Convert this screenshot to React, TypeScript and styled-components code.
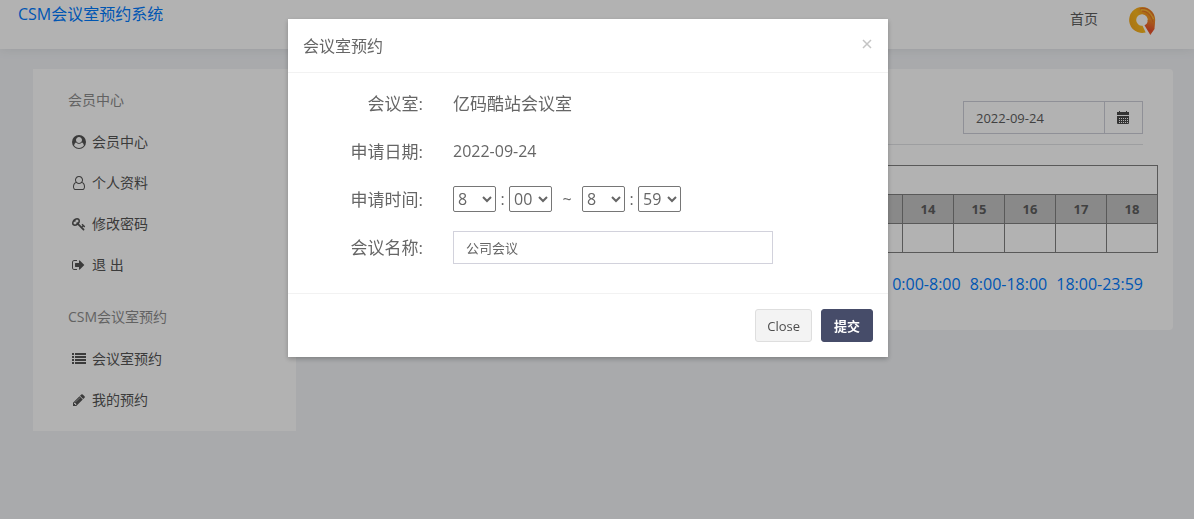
import React from "react";
import styled, { createGlobalStyle } from "styled-components";

const GlobalStyle = createGlobalStyle`
  *, *::before, *::after { box-sizing: border-box; }
  body {
    margin: 0;
    background: #f2f4f7;
    color: #5e5e5e;
    font-family: "Open Sans", "Noto Sans CJK SC", sans-serif;
    font-size: 14px;
    line-height: 20px;
  }
  a { color: inherit; text-decoration: none; }
  button, input, select { font-family: inherit; color: inherit; margin: 0; }
`;

const Header = styled.header`
  display: flex;
  justify-content: space-between;
  align-items: flex-start;
  height: 49px;
  padding: 4px 38px 0 18px;
  background: #fff;
  box-shadow: 0 1px 10px rgba(69, 65, 78, 0.1);
`;

const Brand = styled.a`
  color: #007bff;
  font-size: 16px;
`;

const HeaderNav = styled.nav`
  display: flex;
  align-items: center;
  gap: 30px;
  height: 30px;
`;

const NavLink = styled.a`
  color: #5e5e5e;
`;

const Page = styled.div`
  display: flex;
  align-items: flex-start;
  gap: 30px;
  padding: 20px 21px 20px 33px;
`;

const Sidebar = styled.aside`
  flex: 0 0 263px;
  padding: 21px 35px 11px;
  background: #fff;
`;

const MenuTitle = styled.h2`
  margin: 0 0 11px;
  font-size: 14px;
  font-weight: 400;
  color: #8d8d8d;
`;

const Menu = styled.ul`
  margin: 0 0 22px;
  padding: 0;
  list-style: none;
  &:last-child { margin-bottom: 0; }
`;

const MenuLink = styled.a`
  display: flex;
  align-items: center;
  gap: 6px;
  height: 41px;
  padding-left: 4px;
  color: #555;
  white-space: pre;
  svg { width: 14px; height: 14px; fill: currentColor; }
`;

const Card = styled.main`
  flex: 1;
  min-width: 0;
  padding: 32px 15px 36px;
  background: #fff;
  border-radius: 4px;
`;

const Toolbar = styled.div`
  display: flex;
  justify-content: flex-end;
  margin: 0 15px 20px;
  padding-bottom: 10px;
  border-bottom: 1px solid #e1e2e6;
`;

const DateGroup = styled.div`
  display: flex;
  height: 33px;
  border: 1px solid #cdced9;
`;

const DateInput = styled.input`
  width: 140px;
  padding: 0 12px;
  border: 0;
  background: transparent;
  font-size: 13px;
`;

const DateButton = styled.button`
  display: flex;
  align-items: center;
  justify-content: center;
  width: 38px;
  padding: 0;
  border: 0;
  border-left: 1px solid #cdced9;
  background: transparent;
  svg { width: 13px; height: 13px; fill: #4a4a4a; }
`;

const Schedule = styled.table`
  width: 100%;
  border-collapse: collapse;
  table-layout: fixed;
  font-size: 13px;
  th, td { height: 29px; padding: 0; border: 1px solid #808080; text-align: center; }
`;

const HourCol = styled.col`
  width: 51px;
`;

const HourRow = styled.tr`
  th, td { background: #c4c4c4; font-weight: 700; }
`;

const Ranges = styled.div`
  display: flex;
  justify-content: flex-end;
  gap: 9px;
  margin: 21px 15px 0;
  font-size: 16px;
  a { color: #007bff; }
`;

const Backdrop = styled.div`
  position: fixed;
  inset: 0;
  display: flex;
  justify-content: center;
  align-items: flex-start;
  padding: 19px 18px 0 0;
  background: rgba(0, 0, 0, 0.3);
`;

const Dialog = styled.form`
  width: 600px;
  max-width: 100%;
  background: #fff;
  color: #666;
  box-shadow: 0 2px 5px rgba(0, 0, 0, 0.25);
`;

const DialogHeader = styled.div`
  display: flex;
  justify-content: space-between;
  align-items: center;
  height: 54px;
  padding: 0 15px;
  border-bottom: 1px solid #f2f2f2;
`;

const DialogTitle = styled.h1`
  margin: 0;
  font-size: 16px;
  font-weight: 400;
`;

const DismissButton = styled.button`
  display: flex;
  width: 12px;
  height: 24px;
  padding: 4px 0;
  border: 0;
  background: transparent;
  svg { width: 12px; height: 12px; stroke: #c4c4c4; stroke-width: 1.5; }
`;

const Fields = styled.div`
  display: grid;
  grid-template-columns: 120px 1fr;
  gap: 15px 30px;
  padding: 14px 15px 29px;
`;

const Label = styled.label`
  font-size: 17px;
  line-height: 33px;
  text-align: right;
`;

const Value = styled.output<{ $latin?: boolean }>`
  font-size: ${(p) => (p.$latin ? 16 : 17)}px;
  line-height: 33px;
`;

const TimeRow = styled.div`
  display: flex;
  align-items: center;
  height: 32px;
  font-size: 16px;
`;

const TimeSelect = styled.select`
  width: 43px;
  height: 26px;
  border: 1px solid #767676;
  border-radius: 2px;
  background: #fff;
  font-size: 16px;
`;

const Separator = styled.span<{ $wide?: boolean }>`
  width: ${(p) => (p.$wide ? 30 : 13)}px;
  text-align: center;
`;

const TextInput = styled.input`
  width: 320px;
  max-width: 100%;
  height: 33px;
  padding: 0 12px;
  border: 1px solid #d2d2dc;
  font-size: 13px;
`;

const DialogFooter = styled.div`
  display: flex;
  justify-content: flex-end;
  gap: 9px;
  padding: 15px;
  border-top: 1px solid #f2f2f2;
`;

const Button = styled.button<{ $primary?: boolean }>`
  height: 33px;
  padding: 0 ${(p) => (p.$primary ? 12 : 11)}px;
  border: 1px solid ${(p) => (p.$primary ? "#464c69" : "#dedede")};
  border-radius: 3px;
  background: ${(p) => (p.$primary ? "#464c69" : "#f3f3f3")};
  color: ${(p) => (p.$primary ? "#fff" : "#4d4d4d")};
  font-size: 13px;
  font-weight: ${(p) => (p.$primary ? 700 : 400)};
`;

const icons = {
  account: (
    <svg viewBox="0 0 1792 1792" aria-hidden="true">
      <path fillRule="evenodd" d="M1523 1339q-22-155-87.5-257.5t-184.5-118.5q-67 74-159.5 115.500t-195.500 41.500-195.500-41.500-159.500-115.500q-119 16-184.500 118.500t-87.500 257.500q106 150 271 237.500t356 87.500 356-87.500 271-237.500zM1280 640q0-159-112.500-271.500t-271.500-112.500-271.500 112.500-112.500 271.500 112.500 271.500 271.500 112.500 271.500-112.500 112.500-271.500zM1792 896A896 896 0 1 1 0 896A896 896 0 1 1 1792 896z" />
    </svg>
  ),
  user: (
    <svg viewBox="-128 0 1792 1792" aria-hidden="true">
      <path d="M1201 784q47 14 89.5 38t89 73 79.5 115.5 55 172 22 236.5q0 154-100 263.5t-241 109.5h-854q-141 0-241-109.5t-100-263.5q0-131 22-236.5t55-172 79.5-115.5 89-73 89.5-38q-79-125-79-272 0-104 40.5-198.5t109.5-163.5 163.5-109.5 198.5-40.5 198.5 40.5 163.5 109.5 109.5 163.5 40.5 198.5q0 147-79 272zm-433-656q-159 0-271.5 112.5t-112.5 271.5 112.5 271.5 271.5 112.5 271.5-112.5 112.5-271.5-112.5-271.5-271.5-112.5zm427 1536q88 0 150.5-71.5t62.5-173.5q0-239-78.5-377t-225.5-145q-145 127-336 127t-336-127q-147 7-225.500 145t-78.500 377q0 102 62.500 173.500t150.500 71.500h854z" />
    </svg>
  ),
  key: (
    <svg viewBox="0 0 1792 1792" aria-hidden="true">
      <path d="M832 512q0-80-56-136t-136-56-136 56-56 136q0 42 19 83-41-19-83-19-80 0-136 56t-56 136 56 136 136 56 136-56 56-136q0-42-19-83 41 19 83 19 80 0 136-56t56-136zm851 704q0 17-49 66t-66 49q-9 0-28.5-16t-36.5-33-38.5-40-24.5-26l-96 96 220 220q28 28 28 68 0 42-39 81t-81 39q-40 0-68-28l-671-671q-176 131-365 131-163 0-265.5-102.5t-102.5-265.5q0-160 95-313t248-248 313-95q163 0 265.5 102.5t102.5 265.5q0 189-131 365l355 355 96-96q-3-3-26-24.5t-40-38.5-33-36.5-16-28.5q0-17 49-66t66-49q13 0 23 10 6 6 46 44.5t82 79.5 86.5 86 73 78 28.5 41z" />
    </svg>
  ),
  signOut: (
    <svg viewBox="0 0 1792 1792" aria-hidden="true">
      <path d="M640 1440q0 4 1 20t.5 26.5-3 23.5-10 19.5-20.5 6.5h-320q-119 0-203.5-84.5t-84.5-203.5v-704q0-119 84.5-203.5t203.5-84.5h320q13 0 22.5 9.5t9.5 22.5q0 4 1 20t.5 26.5-3 23.5-10 19.5-20.5 6.5h-320q-66 0-113 47t-47 113v704q0 66 47 113t113 47h312l11.5 1 11.5 3 8 5.5 7 9 2 13.5zm928-544q0 26-19 45l-544 544q-19 19-45 19t-45-19-19-45v-288h-448q-26 0-45-19t-19-45v-384q0-26 19-45t45-19h448v-288q0-26 19-45t45-19 45 19l544 544q19 19 19 45z" />
    </svg>
  ),
  list: (
    <svg viewBox="0 0 14 14" aria-hidden="true">
      <path d="M0 1h2v2H0zM3 1h11v2H3zM0 4h2v2H0zM3 4h11v2H3zM0 7h2v2H0zM3 7h11v2H3zM0 10h2v2H0zM3 10h11v2H3z" />
    </svg>
  ),
  pencil: (
    <svg viewBox="0 0 1792 1792" aria-hidden="true">
      <path d="M491 1536l91-91-235-235-91 91v107h128v128h107zm523-928q0-22-22-22-10 0-17 7l-542 542q-7 7-7 17 0 22 22 22 10 0 17-7l542-542q7-7 7-17zm-54-192l416 416-832 832h-416v-416zm683 96q0 53-37 90l-166 166-416-416 166-165q36-38 90-38 53 0 91 38l235 234q37 39 37 91z" />
    </svg>
  ),
  calendar: (
    <svg viewBox="0 0 13 13" aria-hidden="true">
      <path d="M2 0h1v1h6V0h1v1h2v3H0V1h2z" />
      <path fillRule="evenodd" d="M0 5h12v7a1 1 0 0 1-1 1H1a1 1 0 0 1-1-1zM2 7v1h1V7zM4 7v1h1V7zM6 7v1h1V7zM8 7v1h1V7zM10 7v1h1V7zM2 9v1h1V9zM4 9v1h1V9zM6 9v1h1V9zM8 9v1h1V9zM10 9v1h1V9zM2 11v1h1v-1zM4 11v1h1v-1zM6 11v1h1v-1zM8 11v1h1v-1zM10 11v1h1v-1z" />
    </svg>
  ),
};

function Logo() {
  return (
    <svg width="28" height="32" viewBox="0 0 28 32" aria-hidden="true">
      <defs>
        <linearGradient id="ring" x1="0" y1="0.7" x2="1" y2="0.3">
          <stop offset="0" stopColor="#f5a81c" />
          <stop offset="0.4" stopColor="#fcb91e" />
          <stop offset="0.7" stopColor="#f59a22" />
          <stop offset="1" stopColor="#f08a28" />
        </linearGradient>
        <linearGradient id="tail" x1="0.7" y1="0" x2="0.4" y2="1">
          <stop offset="0" stopColor="#f38a28" />
          <stop offset="0.7" stopColor="#ea4f2c" />
          <stop offset="1" stopColor="#ee6a30" />
        </linearGradient>
      </defs>
      <path fill="url(#ring)" d="M17.700 29.500A13 13 0 1 1 27 19L19.700 18A5.800 5.800 0 1 0 14.500 22.800z" />
      <path fill="url(#tail)" d="M19.700 17L27 17C27.200 21 26.500 24 26.500 26L22.300 32L16.500 22.300C18.500 21.300 19.700 20 19.700 17z" />
      <path fill="none" stroke="#e8702a" strokeWidth="1" d="M12 6c6-2 11 1 13.500 7M14 8c5 0 9 4 11 11" />
      <path fill="none" stroke="#ffc83c" strokeWidth="1" d="M13 7c6-1 10 3 12.500 9" />
    </svg>
  );
}

const menus = [
  {
    title: "会员中心",
    items: [
      { icon: icons.account, text: "会员中心" },
      { icon: icons.user, text: "个人资料" },
      { icon: icons.key, text: "修改密码" },
      { icon: icons.signOut, text: "退 出" },
    ],
  },
  {
    title: "CSM会议室预约",
    items: [
      { icon: icons.list, text: "会议室预约" },
      { icon: icons.pencil, text: "我的预约" },
    ],
  },
];

const hours = Array.from({ length: 11 }, (_, i) => i + 8);
const ranges = ["0:00-8:00", "8:00-18:00", "18:00-23:59"];
const hourOptions = Array.from({ length: 24 }, (_, i) => String(i));
const minuteOptions = ["00", "15", "30", "45", "59"];

function TimePicker({ name, hour, minute }: { name: string; hour: string; minute: string }) {
  return (
    <>
      <TimeSelect aria-label={`${name} 时`} defaultValue={hour}>
        {hourOptions.map((h) => <option key={h}>{h}</option>)}
      </TimeSelect>
      <Separator>:</Separator>
      <TimeSelect aria-label={`${name} 分`} defaultValue={minute}>
        {minuteOptions.map((m) => <option key={m}>{m}</option>)}
      </TimeSelect>
    </>
  );
}

export default function App() {
  return (
    <>
      <GlobalStyle />
      <Header>
        <Brand href="#">CSM会议室预约系统</Brand>
        <HeaderNav>
          <NavLink href="#">首页</NavLink>
          <Logo />
        </HeaderNav>
      </Header>
      <Page>
        <Sidebar>
          {menus.map((menu) => (
            <React.Fragment key={menu.title}>
              <MenuTitle>{menu.title}</MenuTitle>
              <Menu>
                {menu.items.map((item) => (
                  <li key={item.text}>
                    <MenuLink href="#">{item.icon}{item.text}</MenuLink>
                  </li>
                ))}
              </Menu>
            </React.Fragment>
          ))}
        </Sidebar>
        <Card>
          <Toolbar>
            <DateGroup>
              <DateInput aria-label="日期" defaultValue="2022-09-24" />
              <DateButton type="button" aria-label="选择日期">{icons.calendar}</DateButton>
            </DateGroup>
          </Toolbar>
          <Schedule>
            <colgroup>
              <col />
              {hours.map((h) => <HourCol key={h} />)}
            </colgroup>
            <thead>
              <tr><td colSpan={12} /></tr>
              <HourRow>
                <td />
                {hours.map((h) => <th key={h} scope="col">{h}</th>)}
              </HourRow>
            </thead>
            <tbody>
              <tr>
                <td />
                {hours.map((h) => <td key={h} />)}
              </tr>
            </tbody>
          </Schedule>
          <Ranges>
            {ranges.map((r) => <a key={r} href="#">{r}</a>)}
          </Ranges>
        </Card>
      </Page>
      <Backdrop>
        <Dialog role="dialog" aria-modal="true" aria-labelledby="dialog-title">
          <DialogHeader>
            <DialogTitle id="dialog-title">会议室预约</DialogTitle>
            <DismissButton type="button" aria-label="关闭">
              <svg viewBox="0 0 12 12" aria-hidden="true"><path d="M2 2l8 8M10 2l-8 8" /></svg>
            </DismissButton>
          </DialogHeader>
          <Fields>
            <Label htmlFor="room">会议室:</Label>
            <Value id="room">亿码酷站会议室</Value>
            <Label htmlFor="date">申请日期:</Label>
            <Value id="date" $latin>2022-09-24</Value>
            <Label as="span">申请时间:</Label>
            <TimeRow>
              <TimePicker name="开始" hour="8" minute="00" />
              <Separator $wide>~</Separator>
              <TimePicker name="结束" hour="8" minute="59" />
            </TimeRow>
            <Label htmlFor="subject">会议名称:</Label>
            <TextInput id="subject" defaultValue="公司会议" />
          </Fields>
          <DialogFooter>
            <Button type="button">Close</Button>
            <Button type="submit" $primary>提交</Button>
          </DialogFooter>
        </Dialog>
      </Backdrop>
    </>
  );
}
